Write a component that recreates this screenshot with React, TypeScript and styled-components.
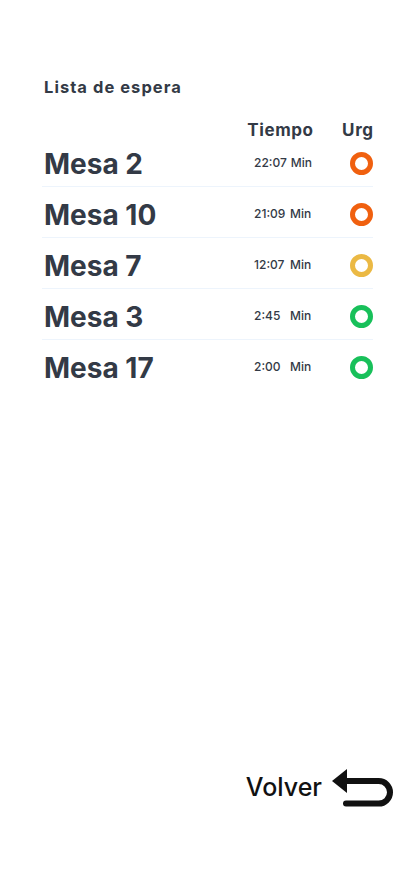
import React from "react";
import styled, { createGlobalStyle } from "styled-components";

const Global = createGlobalStyle`
  html, body { margin: 0; padding: 0; background: #ffffff; }
  body { font-family: Inter, "Noto Sans", sans-serif; -webkit-font-smoothing: antialiased; }
  * { box-sizing: border-box; }
`;

const Page = styled.div`
  min-height: 100vh;
  display: flex;
  flex-direction: column;
  padding: 76px 41px 86px 42px;
  color: #333a46;
`;

const Title = styled.h1`
  margin: 0 0 0 2px;
  font-size: 16.5px;
  line-height: 22px;
  font-weight: 700;
  letter-spacing: 1.05px;
  color: #333a46;
`;

const Table = styled.div`
  margin-top: 14px;
  display: flex;
  flex-direction: column;
`;

const Grid = styled.div`
  display: grid;
  grid-template-columns: 1fr 60px 60px;
  align-items: center;
`;

const HeadRow = styled(Grid)`
  height: 24px;
  align-items: end;
`;

const HeadCell = styled.div`
  justify-self: end;
  font-size: 17px;
  line-height: 12px;
  font-weight: 700;
  letter-spacing: 0.6px;
  margin-right: -0.6px;
`;

const Row = styled(Grid)<{ $last?: boolean }>`
  height: 51px;
  padding-top: 5px;
  border-bottom: 1px solid ${(p) => (p.$last ? "transparent" : "#edf4fc")};
`;

const Name = styled.div`
  padding-left: 2px;
  font-size: 28px;
  line-height: 34px;
  font-weight: 700;
`;

const Time = styled.div`
  display: flex;
  align-items: center;
  gap: 4px;
  font-size: 12px;
  font-weight: 500;
  margin-top: -3px;
  padding-left: 1px;
`;

const TimeValue = styled.span`
  min-width: 32px;
`;

const Dot = styled.div<{ $color: string }>`
  justify-self: end;
  width: 23px;
  height: 23px;
  border-radius: 50%;
  border: 5.5px solid ${(p) => p.$color};
`;

const Footer = styled.div`
  margin-top: auto;
  display: flex;
  justify-content: flex-end;
  align-items: center;
  gap: 8px;
  margin-right: -23px;
`;

const BackLabel = styled.span`
  font-size: 25px;
  font-weight: 500;
  margin-top: -3px;
  color: #111111;
`;

const BackIcon = () => (
  <svg width="66" height="44" viewBox="0 0 66 44" aria-hidden>
    <polygon points="2,15 17,3 17,27" fill="#111" />
    <path
      d="M15 15 H48.7 A11.3 11.3 0 0 1 48.7 37.6 H16"
      fill="none"
      stroke="#111"
      strokeWidth="6"
      strokeLinecap="round"
      strokeLinejoin="round"
    />
  </svg>
);

const rows = [
  { name: "Mesa 2", time: "22:07", color: "#f0600f" },
  { name: "Mesa 10", time: "21:09", color: "#f0600f" },
  { name: "Mesa 7", time: "12:07", color: "#ebb944" },
  { name: "Mesa 3", time: "2:45", color: "#18c05a" },
  { name: "Mesa 17", time: "2:00", color: "#18c05a" },
];

export default function App() {
  return (
    <>
      <Global />
      <Page>
        <Title>Lista de espera</Title>
        <Table>
          <HeadRow>
            <div />
            <HeadCell>Tiempo</HeadCell>
            <HeadCell>Urg</HeadCell>
          </HeadRow>
          {rows.map((r, i) => (
            <Row key={r.name} $last={i === rows.length - 1}>
              <Name>{r.name}</Name>
              <Time>
                <TimeValue>{r.time}</TimeValue>
                <span>Min</span>
              </Time>
              <Dot $color={r.color} />
            </Row>
          ))}
        </Table>
        <Footer>
          <BackLabel>Volver</BackLabel>
          <BackIcon />
        </Footer>
      </Page>
    </>
  );
}
